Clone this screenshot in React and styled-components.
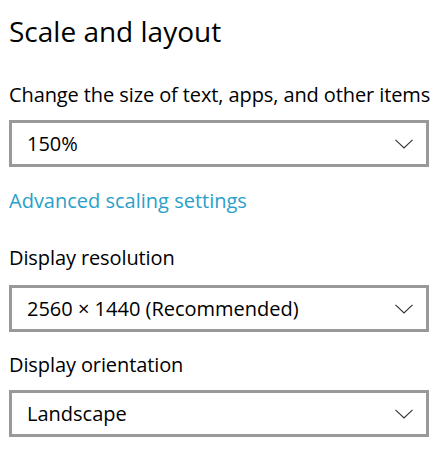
import React from "react";
import styled, { createGlobalStyle } from "styled-components";

const Global = createGlobalStyle`
  html, body { margin: 0; padding: 0; background: #fff; }
  body { font-family: "Open Sans", "Noto Sans", sans-serif; color: #000; }
`;

const Page = styled.div`
  display: flex;
  flex-direction: column;
  align-items: flex-start;
  padding: 13px 0 0 9px;
  width: 420px;
`;

const Heading = styled.h1`
  margin: 0;
  font-size: 28px;
  font-weight: 400;
  line-height: 36px;
  color: #000;
`;

const Label = styled.div`
  margin-top: ${(p) => p.$top}px;
  font-size: 20px;
  line-height: 28px;
  letter-spacing: -0.1px;
  color: #000;
  white-space: nowrap;
`;

const Link = styled.a`
  margin-top: ${(p) => p.$top}px;
  font-size: 20px;
  line-height: 28px;
  color: #2b9fc9;
  text-decoration: none;
`;

const Select = styled.div`
  box-sizing: border-box;
  margin-top: ${(p) => p.$top}px;
  width: 420px;
  height: 47px;
  border: 3px solid #999;
  display: flex;
  align-items: center;
  justify-content: space-between;
  padding: 0 13px 0 15px;
  font-size: 20px;
  line-height: 28px;
  color: #000;
`;

const Chevron = () => (
  <svg width="18" height="10" viewBox="0 0 18 10" fill="none">
    <path d="M0.5 0.8 L9 9 L17.5 0.8" stroke="#333" strokeWidth="1.1" />
  </svg>
);

export default function App() {
  return (
    <>
      <Global />
      <Page>
        <Heading>Scale and layout</Heading>
        <Label $top={32}>Change the size of text, apps, and other items</Label>
        <Select $top={11}>
          <span>150%</span>
          <Chevron />
        </Select>
        <Link $top={20} href="#">Advanced scaling settings</Link>
        <Label $top={29}>Display resolution</Label>
        <Select $top={13}>
          <span>2560 × 1440 (Recommended)</span>
          <Chevron />
        </Select>
        <Label $top={19}>Display orientation</Label>
        <Select $top={11}>
          <span>Landscape</span>
          <Chevron />
        </Select>
      </Page>
    </>
  );
}
